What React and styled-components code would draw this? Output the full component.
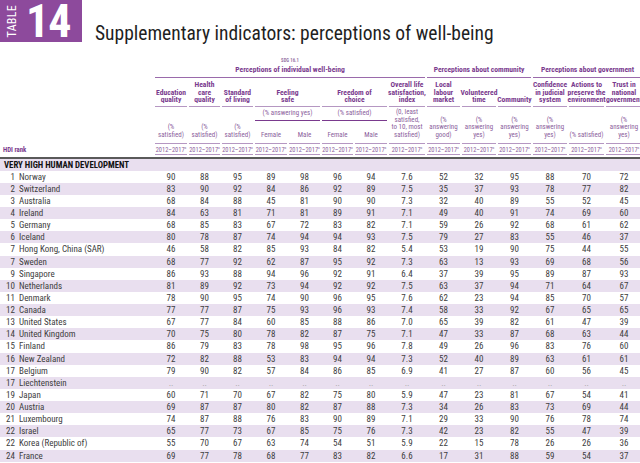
import React from "react";
import styled, { createGlobalStyle } from "styled-components";

const GlobalStyle = createGlobalStyle`
  body {
    margin: 0;
    background: #fff;
    overflow: hidden;
    font-family: "Roboto Condensed", "Liberation Sans", Arial, sans-serif;
  }
`;

// label column + 14 indicator columns, shared by header and body
const COLS = "153px 32px 31px 31px 32px 31px 31px 32px 36px 33px 34px 33px 34px 35px 36px";

const Page = styled.div`
  width: 640px;
  height: 463px;
  overflow: hidden;
`;

const TitleBar = styled.div`
  display: flex;
  align-items: flex-end;
  height: 42px;
`;

const Badge = styled.div`
  width: 82px;
  height: 42px;
  background: #8d4a9c;
  display: flex;
  align-items: center;
  color: #fff;
`;

const BadgeWord = styled.span`
  writing-mode: vertical-rl;
  transform: rotate(180deg);
  font-size: 12px;
  letter-spacing: 0.3px;
  margin-left: 5px;
`;

const BadgeNumber = styled.span`
  font-weight: bold;
  font-size: 46px;
  line-height: 40px;
  letter-spacing: -1px;
  margin-left: 7px;
`;

const Title = styled.h1`
  margin: 0 0 -4px 13px;
  font-size: 19.5px;
  font-weight: normal;
  color: #1f1f1f;
  line-height: 24px;
  white-space: nowrap;
`;

const HeadGrid = styled.div`
  display: grid;
  grid-template-columns: ${COLS};
  grid-template-rows: 22px 29px 14px 23px 11px;
  column-gap: 2px;
  margin-top: 14px;
`;

const Cell = styled.div`
  grid-column: ${p => p.$c} / span ${p => p.$s || 1};
  grid-row: ${p => p.$r} / span ${p => p.$rs || 1};
  display: flex;
  flex-direction: column;
  justify-content: flex-end;
  align-items: center;
  text-align: center;
  white-space: nowrap;
`;

const GroupHead = styled(Cell)`
  border-bottom: 1.5px solid #9a6aab;
  padding-bottom: 3px;
  color: #7a3a8e;
  font-weight: bold;
  font-size: 7.6px;
  line-height: 8px;
`;

const Sdg = styled.div`
  font-size: 4.8px;
  line-height: 6px;
  color: #9a79a8;
  margin-bottom: 2px;
`;

const ColHead = styled(Cell)`
  border-bottom: 1.5px solid #b597c2;
  padding-bottom: 2px;
  color: #7a3a8e;
  font-weight: bold;
  font-size: 7.6px;
  line-height: 7.7px;
`;

const SubHead = styled(Cell)`
  justify-content: center;
  border-bottom: 1.5px solid #7a3a8e;
  color: #8c5f9d;
  font-size: 7px;
  line-height: 7.7px;
`;

const UnitHead = styled(Cell)`
  border-bottom: 1.5px solid #b597c2;
  padding-bottom: 3px;
  color: #8c5f9d;
  font-size: 7px;
  line-height: 7.8px;
`;

const YearHead = styled(Cell)`
  border-bottom: 1px solid #b597c2;
  justify-content: center;
  color: #8c5f9d;
  font-size: 6.4px;
  line-height: 8px;
  sup {
    font-size: 3.6px;
    vertical-align: 3px;
  }
`;

const RankHead = styled(Cell)`
  align-items: flex-start;
  justify-content: center;
  padding-left: 3px;
  color: #7a3a8e;
  font-weight: bold;
  font-size: 6.8px;
`;

const Rule = styled.div`
  height: 2px;
  margin-top: 1.5px;
  background: #5a5a5a;
`;

const Row = styled.div`
  display: grid;
  grid-template-columns: ${COLS};
  column-gap: 2px;
  height: 12.13px;
  align-items: center;
  background: ${p => (p.$shade ? "#e9dfef" : "#fff")};
  color: #404040;
  font-size: 9px;
`;

const Label = styled.div`
  display: flex;
  gap: 4px;
  white-space: nowrap;
`;

const Rank = styled.span`
  width: 15px;
  text-align: right;
`;

const Value = styled.div`
  text-align: center;
  color: ${p => (p.$missing ? "#a0a0a0" : "inherit")};
`;

const GroupRow = styled(Row)`
  display: flex;
  padding-left: 4px;
  font-weight: bold;
  color: #111;
  font-size: 8.8px;
`;

const groups = [
  { c: 2, s: 8, t: "Perceptions of individual well-being", sdg: "SDG 16.1" },
  { c: 10, s: 3, t: "Perceptions about community" },
  { c: 13, s: 3, t: "Perceptions about government" }
];

const heads = [
  { c: 2, t: ["Education", "quality"] },
  { c: 3, t: ["Health", "care", "quality"] },
  { c: 4, t: ["Standard", "of living"] },
  { c: 5, s: 2, t: ["Feeling", "safe"] },
  { c: 7, s: 2, t: ["Freedom of", "choice"] },
  { c: 9, t: ["Overall life", "satisfaction,", "index"] },
  { c: 10, t: ["Local", "labour", "market"] },
  { c: 11, t: ["Volunteered", "time"] },
  { c: 12, t: ["Community"] },
  { c: 13, t: ["Confidence", "in judicial", "system"] },
  { c: 14, t: ["Actions to", "preserve the", "environment"] },
  { c: 15, t: ["Trust in", "national", "government"] }
];

const satisfied = ["(%", "satisfied)"];
const answeringYes = ["(%", "answering", "yes)"];

const units = [
  { c: 2, t: satisfied },
  { c: 3, t: satisfied },
  { c: 4, t: satisfied },
  { c: 9, t: ["(0, least", "satisfied,", "to 10, most", "satisfied)"] },
  { c: 10, t: ["(%", "answering", "good)"] },
  { c: 11, t: answeringYes },
  { c: 12, t: answeringYes },
  { c: 13, t: answeringYes },
  { c: 14, t: ["(% satisfied)"] },
  { c: 15, t: answeringYes }
];

const rows = [
  ["1", "Norway", "90 88 95 89 98 96 94 7.6 52 32 95 88 70 72"],
  ["2", "Switzerland", "83 90 92 84 86 92 89 7.5 35 37 93 78 77 82"],
  ["3", "Australia", "68 84 88 45 81 90 90 7.3 32 40 89 55 52 45"],
  ["4", "Ireland", "84 63 81 71 81 89 91 7.1 49 40 91 74 69 60"],
  ["5", "Germany", "68 85 83 67 72 83 82 7.1 59 26 92 68 61 62"],
  ["6", "Iceland", "80 78 87 74 94 94 93 7.5 79 27 83 55 46 37"],
  ["7", "Hong Kong, China (SAR)", "46 58 82 85 93 84 82 5.4 53 19 90 75 44 55"],
  ["7", "Sweden", "68 77 92 62 87 95 92 7.3 63 13 93 69 68 56"],
  ["9", "Singapore", "86 93 88 94 96 92 91 6.4 37 39 95 89 87 93"],
  ["10", "Netherlands", "81 89 92 73 94 92 92 7.5 63 37 94 71 64 67"],
  ["11", "Denmark", "78 90 95 74 90 96 95 7.6 62 23 94 85 70 57"],
  ["12", "Canada", "77 77 87 75 93 96 93 7.4 58 33 92 67 65 65"],
  ["13", "United States", "67 77 84 60 85 88 86 7.0 65 39 82 61 47 39"],
  ["14", "United Kingdom", "70 75 80 78 82 87 75 7.1 47 33 87 68 63 44"],
  ["15", "Finland", "86 79 83 78 98 95 96 7.8 49 26 96 83 76 60"],
  ["16", "New Zealand", "72 82 88 53 83 94 94 7.3 52 40 89 63 61 61"],
  ["17", "Belgium", "79 90 82 57 84 86 85 6.9 41 27 87 60 56 45"],
  ["17", "Liechtenstein", ".. .. .. .. .. .. .. .. .. .. .. .. .. .."],
  ["19", "Japan", "60 71 70 67 82 75 80 5.9 47 23 81 67 54 41"],
  ["20", "Austria", "69 87 87 80 82 87 88 7.3 34 26 83 73 69 44"],
  ["21", "Luxembourg", "74 87 88 76 83 90 89 7.1 29 33 90 76 78 74"],
  ["22", "Israel", "65 77 73 67 85 75 76 7.3 42 23 82 55 47 39"],
  ["22", "Korea (Republic of)", "55 70 67 63 74 54 51 5.9 22 15 78 26 26 36"],
  ["24", "France", "69 77 78 68 77 83 82 6.6 17 31 88 59 54 37"]
];

const lines = t => t.map((l, i) => <span key={i}>{l}</span>);

export default function App() {
  return (
    <Page>
      <GlobalStyle />
      <TitleBar>
        <Badge>
          <BadgeWord>TABLE</BadgeWord>
          <BadgeNumber>14</BadgeNumber>
        </Badge>
        <Title>Supplementary indicators: perceptions of well-being</Title>
      </TitleBar>

      <HeadGrid>
        {groups.map(g => (
          <GroupHead key={g.t} $c={g.c} $s={g.s} $r={1}>
            {g.sdg && <Sdg>{g.sdg}</Sdg>}
            {g.t}
          </GroupHead>
        ))}
        {heads.map(h => (
          <ColHead key={h.c} $c={h.c} $s={h.s} $r={2}>
            {lines(h.t)}
          </ColHead>
        ))}
        <SubHead $c={5} $s={2} $r={3}>(% answering yes)</SubHead>
        <SubHead $c={7} $s={2} $r={3}>(% satisfied)</SubHead>
        {units.map(u => (
          <UnitHead key={u.c} $c={u.c} $r={3} $rs={2}>
            {lines(u.t)}
          </UnitHead>
        ))}
        {[5, 6, 7, 8].map(c => (
          <UnitHead key={c} $c={c} $r={4}>
            {c % 2 ? "Female" : "Male"}
          </UnitHead>
        ))}
        <RankHead $c={1} $r={5}>HDI rank</RankHead>
        {Array.from({ length: 14 }, (_, i) => (
          <YearHead key={i} $c={i + 2} $r={5}>
            <span>
              2012–2017<sup>a</sup>
            </span>
          </YearHead>
        ))}
      </HeadGrid>
      <Rule />

      <GroupRow $shade>VERY HIGH HUMAN DEVELOPMENT</GroupRow>
      {rows.map(([rank, name, vals], i) => (
        <Row key={name} $shade={i % 2 === 1}>
          <Label>
            <Rank>{rank}</Rank>
            {name}
          </Label>
          {vals.split(" ").map((v, j) => (
            <Value key={j} $missing={v === ".."}>
              {v}
            </Value>
          ))}
        </Row>
      ))}
    </Page>
  );
}
